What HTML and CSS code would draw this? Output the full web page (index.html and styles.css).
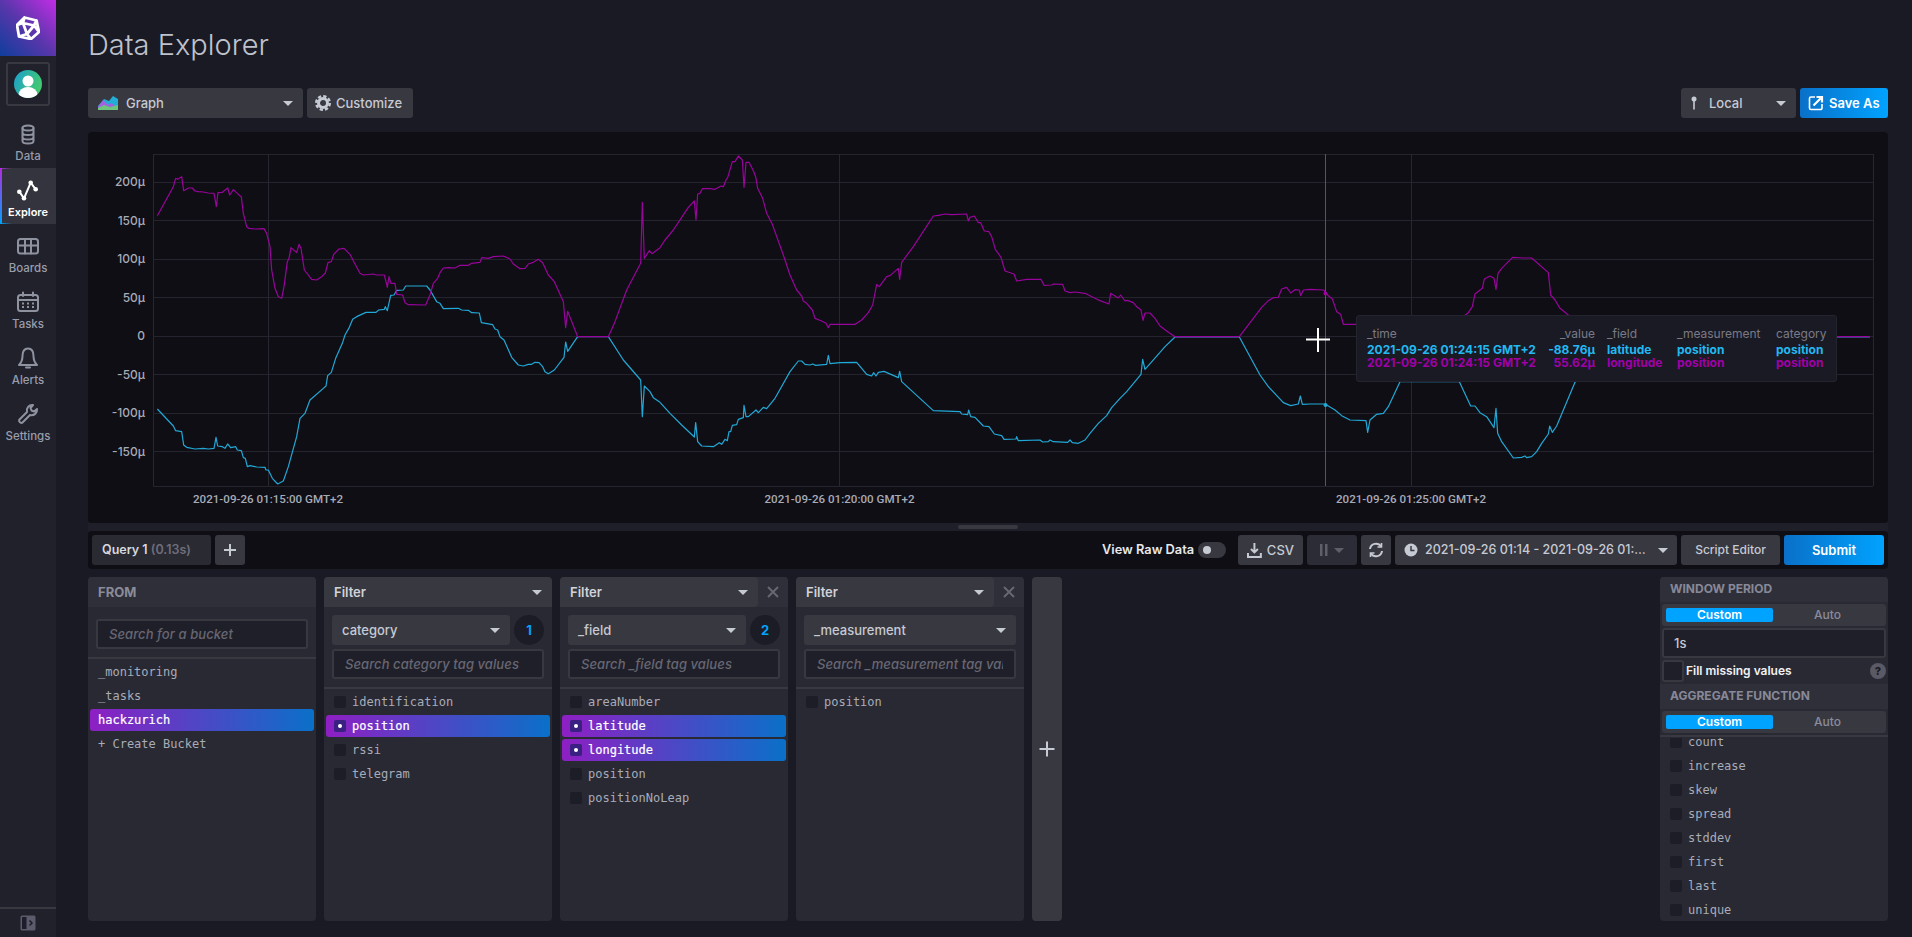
FILE: index.html
```html
<!DOCTYPE html>
<html lang="en">
<head>
<meta charset="utf-8">
<title>Data Explorer</title>
<link rel="stylesheet" href="styles.css">
</head>
<body>
<nav class="nav">
  <div class="logo">
    <svg width="24" height="24" viewBox="0 0 24 24" class="logo-mark"><path d="M8.500 1.500 20.500 4.500 23 16 15 23 3 20.500 1 9Z M7 7 18 9.500 11 18Z M8.500 1.500 7 7 M20.500 4.500 18 9.500 M23 16 18 9.500 M15 23 11 18 M3 20.500 11 18 M1 9 7 7"/></svg>
  </div>
  <div class="avatar-box">
    <svg width="28" height="28" viewBox="0 0 28 28"><defs><linearGradient id="av" x1="0" y1="0" x2="1" y2=".4"><stop offset="0" stop-color="#1b9fd0"/><stop offset="1" stop-color="#41c870"/></linearGradient><clipPath id="avc"><circle cx="14" cy="14" r="14"/></clipPath></defs><circle cx="14" cy="14" r="14" fill="url(#av)"/><g clip-path="url(#avc)" fill="#fff"><circle cx="14" cy="11" r="5.500"/><ellipse cx="14" cy="25" rx="9.500" ry="8"/></g></svg>
  </div>
  <a class="nav-item">
    <svg width="24" height="24" viewBox="0 0 24 24" class="nav-icon"><ellipse cx="12" cy="6" rx="5.500" ry="2.500"/><path d="M6.500 6v13c0 1.500 2.500 2.500 5.500 2.500s5.500-1 5.500-2.500V6 M6.500 10.500c0 1.500 2.500 2.500 5.500 2.500s5.500-1 5.500-2.500 M6.500 15c0 1.500 2.500 2.500 5.500 2.500s5.500-1 5.500-2.500"/></svg>
    <span>Data</span>
  </a>
  <a class="nav-item active">
    <svg width="24" height="24" viewBox="0 0 24 24" class="nav-icon"><path d="M3.300 13.700 8 20.300 14.700 4.700 19.700 11.300"/><circle class="dot" cx="3.300" cy="13.700" r="2.300"/><circle class="dot" cx="8" cy="20.300" r="2.300"/><circle class="dot" cx="14.700" cy="4.700" r="2.300"/><circle class="dot" cx="19.700" cy="11.300" r="2.300"/></svg>
    <span>Explore</span>
  </a>
  <a class="nav-item">
    <svg width="24" height="24" viewBox="0 0 24 24" class="nav-icon"><rect x="2" y="5" width="20" height="14.500" rx="2.500"/><path d="M2 11.500H22 M9 5V19.500 M15 5V19.500"/></svg>
    <span>Boards</span>
  </a>
  <a class="nav-item">
    <svg width="24" height="24" viewBox="0 0 24 24" class="nav-icon"><rect x="2" y="5" width="20" height="16" rx="2.500"/><path d="M2 10H22 M7 2.500V6 M17 2.500V6"/><path class="dots" d="M6 13.500h2 M11 13.500h2 M16 13.500h2 M6 17h2 M11 17h2 M16 17h2"/></svg>
    <span>Tasks</span>
  </a>
  <a class="nav-item">
    <svg width="24" height="24" viewBox="0 0 24 24" class="nav-icon"><path d="M12 2.500C7.500 2.500 6.500 6 6.500 10 6.500 14 5.500 16.500 3 19H21C18.500 16.500 17.500 14 17.500 10 17.500 6 16.500 2.500 12 2.500Z M10 21.500h4"/></svg>
    <span>Alerts</span>
  </a>
  <a class="nav-item">
    <svg width="24" height="24" viewBox="0 0 24 24" class="nav-icon"><path d="M3.500 17.500 11 10C10 6 13 2.500 17 3L14.500 6 15.500 8.500 18 9.500 21 7C21.500 11 18 14 14 13L6.500 20.500C5 22 2 19 3.500 17.500Z"/></svg>
    <span>Settings</span>
  </a>
  <div class="nav-foot">
    <svg width="16" height="16" viewBox="0 0 16 16"><rect x=".5" y=".5" width="15" height="15" rx="1.500" fill="#5b5b6c"/><rect x="2" y="2" width="4.500" height="12" fill="#1d1d2b"/><path d="M9.500 5.500 12 8 9.500 10.500" fill="none" stroke="#1d1d2b" stroke-width="1.500"/></svg>
  </div>
</nav>

<main class="main">
  <header class="page-head"><h1>Data Explorer</h1></header>

  <div class="toolbar">
    <button class="btn select graph-select">
      <svg width="20" height="14" viewBox="0 0 20 14"><path d="M0 10 6 3 11 5 15 0 20 3V14H0Z" fill="#22add6"/><path d="M0 11 5 4 10 9 13 7 20 12V14H0Z" fill="#a55fe0"/><path d="M0 14V12L6 9 12 11 20 9V14Z" fill="#6cc57c"/></svg>
      <span class="grow">Graph</span><i class="caret"></i>
    </button>
    <button class="btn customize">
      <svg width="16" height="16" viewBox="0 0 16 16" class="gear"><circle cx="8" cy="8" r="4.500"/><circle cx="8" cy="8" r="6.800" class="teeth"/></svg>
      <span>Customize</span>
    </button>
    <div class="toolbar-end">
      <button class="btn select local-select">
        <svg width="6" height="14" viewBox="0 0 6 14"><circle cx="3" cy="3" r="2.500" fill="#c6cad3"/><rect x="2.200" y="4" width="1.600" height="9.500" fill="#c6cad3"/></svg>
        <span class="grow">Local</span><i class="caret"></i>
      </button>
      <button class="btn primary save-as">
        <svg width="16" height="16" viewBox="0 0 16 16" fill="none" stroke="#fff" stroke-width="1.600"><path d="M7 2H3A1.500 1.500 0 0 0 1.500 3.500V13A1.500 1.500 0 0 0 3 14.500H12.500A1.500 1.500 0 0 0 14 13V9"/><path d="M5.500 10.500 13 3M8.500 2H14V7.500" stroke-width="2.200"/></svg>
        <span>Save As</span>
      </button>
    </div>
  </div>

  <section class="chart">
    <svg class="plot" width="1800" height="391" viewBox="88 132 1800 391">
      <g class="grid-h">
        <path d="M153 154.500H1873 M153 182.500H1873 M153 220.500H1873 M153 259.500H1873 M153 297.500H1873 M153 336.500H1873 M153 374.500H1873 M153 413.500H1873 M153 451.500H1873 M153 486.500H1873"/>
      </g>
      <g class="grid-v">
        <path d="M153.500 154V486 M268.500 154V486 M839.500 154V486 M1411.500 154V486 M1873.500 154V486"/>
      </g>
      <path class="hover-line" d="M1325.500 154V486"/>
      <g class="y-labels">
        <text x="145" y="186">200µ</text>
        <text x="145" y="224.500">150µ</text>
        <text x="145" y="263">100µ</text>
        <text x="145" y="301.500">50µ</text>
        <text x="145" y="340">0</text>
        <text x="145" y="378.500">-50µ</text>
        <text x="145" y="417">-100µ</text>
        <text x="145" y="455.500">-150µ</text>
      </g>
      <g class="x-labels">
        <text x="268" y="503">2021-09-26 01:15:00 GMT+2</text>
        <text x="839.500" y="503">2021-09-26 01:20:00 GMT+2</text>
        <text x="1411" y="503">2021-09-26 01:25:00 GMT+2</text>
      </g>
      <g class="series blue">
        <polyline transform="translate(140 130) scale(.33333)" points="52,837 100,888 107,902 125,905 131,945 140,952 165,957 190,955 205,957 222,955 228,922 233,948 247,950 255,955 263,942 272,953 287,950 292,960 304,962 310,983 316,985 322,1010 330,1007 350,1011 375,1012 378,1020 385,1020 397,1045 413,1062 430,1053 445,1010 470,920 480,865 495,850 510,810 550,775 558,768 563,737 574,727 587,685 607,640 615,615 628,592 638,568 650,560 678,547 708,547 716,540 733,538 736,530 742,542 752,496 762,495 770,481 790,480 797,468 860,468 870,480 890,515 900,520 910,536 955,535 965,540 985,541 995,548 1018,549 1024,578 1058,584 1065,597 1073,600 1080,620 1092,630 1115,682 1135,705 1150,708 1165,703 1175,703 1185,697 1197,698 1208,710 1215,725 1225,731 1243,720 1272,682 1277,636 1283,664 1313,620 1405,620 1450,690 1502,750 1507,860 1513,768 1530,785 1540,803 1560,817"/>
        <polyline transform="translate(640 130) scale(.33333)" points="60,817 90,850 125,885 163,921 167,878 173,935 185,948 220,950 238,938 245,943 255,928 262,932 267,905 272,905 277,886 290,884 295,868 310,863 312,826 318,860 325,860 348,840 355,848 370,832 380,836 405,805 450,725 475,693 485,693 495,703 510,705 518,702 527,706 560,703 565,676 570,701 600,698 650,697 680,733 695,738 701,728 708,738 715,727 732,724 775,743 779,724 785,755 880,842 960,845 965,852 983,854 986,840 992,860 1005,862 1030,888 1047,890 1063,912 1085,917 1092,928 1128,927 1130,920 1135,932 1200,930 1208,936 1225,935 1230,930 1240,935 1283,937 1290,930 1297,938 1315,940 1335,930 1350,910 1375,880 1400,857 1415,833 1440,805 1460,785 1503,733 1508,688 1515,718 1560,667"/>
        <polyline transform="translate(1140 130) scale(.33333)" points="60,667 75,650 105,621 298,621 360,735 385,770 430,818 452,827 475,822 481,798 487,823 510,822 552,822 560,825 585,840 605,857 630,870 678,872 683,907 690,870 710,853 730,850 745,830 780,755 958,755 992,828 1005,828 1020,848 1040,860 1062,893 1068,835 1073,910 1085,935 1120,984 1145,982 1155,978 1160,983 1175,980 1190,965 1205,940 1225,912 1229,888 1237,907 1250,888 1305,757 1450,621 2190,621"/>
        <circle cx="1325.500" cy="405" r="2"/>
      </g>
      <g class="series magenta">
        <polyline transform="translate(140 130) scale(.33333)" points="52,257 100,170 107,145 113,148 125,140 131,182 145,174 157,174 165,183 175,185 190,186 205,189 222,190 229,230 234,188 247,187 263,174 269,195 280,179 292,190 304,201 310,250 320,290 326,295 345,297 372,296 380,310 390,350 395,420 405,475 415,500 425,505 432,470 442,395 447,385 453,353 470,368 477,343 483,355 493,420 515,448 530,450 545,440 556,429 564,398 574,395 581,373 597,357 612,355 630,373 645,402 660,430 670,435 700,432 710,435 733,435 742,472 747,440 753,460 765,460 770,493 788,495 795,518 805,524 857,525 870,495 880,460 893,445 900,428 910,414 925,413 945,414 960,406 985,406 995,400 1020,397 1025,383 1045,385 1060,380 1090,378 1110,387 1120,402 1140,416 1155,415 1165,402 1180,397 1195,388 1208,398 1225,435 1243,455 1270,515 1277,593 1283,544 1313,620 1405,620 1425,575 1460,480 1502,400 1507,217 1513,385 1528,362 1536,371 1560,353"/>
        <polyline transform="translate(640 130) scale(.33333)" points="60,353 75,330 100,300 125,262 145,232 163,213 168,270 173,192 180,190 187,176 210,176 225,178 243,168 250,170 258,150 263,143 277,95 285,95 295,78 307,90 312,172 318,97 327,97 340,122 347,140 353,175 368,205 380,250 397,283 430,375 450,435 470,480 485,498 490,513 500,520 517,540 525,565 545,573 558,580 565,593 570,583 645,583 665,570 685,548 698,525 710,463 718,470 740,440 750,437 775,415 779,448 785,397 820,350 880,258 895,256 915,252 935,254 980,252 985,273 990,262 1003,258 1015,278 1022,278 1033,303 1047,305 1055,320 1066,358 1083,382 1095,423 1122,432 1130,453 1160,448 1203,448 1212,466 1235,465 1240,462 1268,463 1275,483 1290,488 1305,486 1335,490 1380,512 1407,522 1412,490 1435,504 1442,495 1455,513 1462,511 1480,518 1490,530 1503,540 1509,571 1515,549 1530,549 1545,565 1560,588"/>
        <polyline transform="translate(1140 130) scale(.33333)" points="60,588 80,603 105,620 298,620 340,565 365,532 385,512 400,503 415,502 425,477 440,472 452,489 465,479 478,480 482,497 490,480 510,478 552,480 556,490 577,507 590,545 602,553 610,583 650,583 975,556 985,548 997,530 1005,492 1027,475 1033,447 1050,438 1062,445 1068,478 1074,430 1085,415 1118,382 1150,384 1175,384 1225,428 1232,495 1245,510 1260,535 1285,555 1450,620 2190,620"/>
        <circle cx="1325.500" cy="293.500" r="2"/>
      </g>
      <path class="cross" d="M1306 339.500H1330 M1318 328V352"/>
    </svg>
    <div class="tip">
      <span class="th">_time</span><span class="th right">_value</span><span class="th">_field</span><span class="th">_measurement</span><span class="th">category</span>
      <span class="c1">2021-09-26 01:24:15 GMT+2</span><span class="c1 right">-88.76µ</span><span class="c1">latitude</span><span class="c1">position</span><span class="c1">position</span>
      <span class="c2">2021-09-26 01:24:15 GMT+2</span><span class="c2 right">55.62µ</span><span class="c2">longitude</span><span class="c2">position</span><span class="c2">position</span>
    </div>
  </section>

  <div class="resizer"><i></i></div>

  <div class="querybar">
    <div class="qtab">Query 1 <em>(0.13s)</em></div>
    <button class="btn square"><svg width="14" height="14" viewBox="0 0 14 14" class="plus"><path d="M7 1V13M1 7H13"/></svg></button>
    <div class="qbar-end">
      <span class="raw-label">View Raw Data</span>
      <span class="switch"><i></i></span>
      <button class="btn csv">
        <svg width="15" height="16" viewBox="0 0 15 16" fill="none" stroke="#c6cad3" stroke-width="2"><path d="M7.500 1V10M4 7 7.500 10.500 11 7M1 11V15H14V11"/></svg>
        <span>CSV</span>
      </button>
      <button class="btn dim pause">
        <svg width="8" height="12" viewBox="0 0 8 12" fill="#5f5f6b"><rect width="2.500" height="12"/><rect x="5" width="2.500" height="12"/></svg>
        <i class="caret dark"></i>
      </button>
      <button class="btn square refresh">
        <svg width="16" height="16" viewBox="0 0 16 16" fill="none" stroke="#c6cad3" stroke-width="2"><path d="M2 7A6 6 0 0 1 13 4.500M14 9A6 6 0 0 1 3 11.500"/><path d="M13.500 1V5H9.500M2.500 15V11H6.500" stroke-width="1.600"/></svg>
      </button>
      <button class="btn timerange">
        <svg width="14" height="14" viewBox="0 0 14 14"><circle cx="7" cy="7" r="6.500" fill="#c6cad3"/><path d="M7 3V7.500H10.500" stroke="#383841" stroke-width="1.500" fill="none"/></svg>
        <span class="range-text">2021-09-26 01:14 - 2021-09-26 01:25:00</span><i class="caret"></i>
      </button>
      <button class="btn script">Script Editor</button>
      <button class="btn primary submit">Submit</button>
    </div>
  </div>

  <div class="builder">
    <div class="card">
      <div class="card-head plain">FROM</div>
      <div class="card-tools bucket-tools"><input class="search" placeholder="Search for a bucket"></div>
      <ul class="list">
        <li>_monitoring</li>
        <li>_tasks</li>
        <li class="on">hackzurich</li>
        <li>+ Create Bucket</li>
      </ul>
    </div>

    <div class="card">
      <div class="card-head"><span class="head-main">Filter<i class="caret"></i></span></div>
      <div class="card-tools">
        <div class="tag-row"><button class="btn select tag"><span class="grow">category</span><i class="caret"></i></button><span class="badge">1</span></div>
        <input class="search" placeholder="Search category tag values">
      </div>
      <ul class="list checks">
        <li><i class="box"></i>identification</li>
        <li class="on"><i class="box"></i>position</li>
        <li><i class="box"></i>rssi</li>
        <li><i class="box"></i>telegram</li>
      </ul>
    </div>

    <div class="card">
      <div class="card-head"><span class="head-main closable">Filter<i class="caret"></i></span><span class="close"><svg width="12" height="12" viewBox="0 0 12 12"><path d="M1 1 11 11M11 1 1 11"/></svg></span></div>
      <div class="card-tools">
        <div class="tag-row"><button class="btn select tag"><span class="grow">_field</span><i class="caret"></i></button><span class="badge">2</span></div>
        <input class="search" placeholder="Search _field tag values">
      </div>
      <ul class="list checks">
        <li><i class="box"></i>areaNumber</li>
        <li class="on"><i class="box"></i>latitude</li>
        <li class="on"><i class="box"></i>longitude</li>
        <li><i class="box"></i>position</li>
        <li><i class="box"></i>positionNoLeap</li>
      </ul>
    </div>

    <div class="card">
      <div class="card-head"><span class="head-main closable">Filter<i class="caret"></i></span><span class="close"><svg width="12" height="12" viewBox="0 0 12 12"><path d="M1 1 11 11M11 1 1 11"/></svg></span></div>
      <div class="card-tools">
        <div class="tag-row"><button class="btn select tag"><span class="grow">_measurement</span><i class="caret"></i></button></div>
        <input class="search" placeholder="Search _measurement tag values">
      </div>
      <ul class="list checks">
        <li><i class="box"></i>position</li>
      </ul>
    </div>

    <button class="add-card"><svg width="16" height="16" viewBox="0 0 16 16" class="plus"><path d="M8 .500V15.500M.500 8H15.500"/></svg></button>

    <aside class="card side">
      <div class="side-head">WINDOW PERIOD</div>
      <div class="toggle"><span class="t-on">Custom</span><span>Auto</span></div>
      <input class="search period" value="1s">
      <div class="fill-row"><i class="fill-box"></i><span class="fill-label">Fill missing values</span><span class="help">?</span></div>
      <div class="side-head">AGGREGATE FUNCTION</div>
      <div class="toggle"><span class="t-on">Custom</span><span>Auto</span></div>
      <div class="side-rule"></div>
      <div class="side-scroll">
        <ul class="list checks scrolled">
          <li><i class="box"></i>count</li>
          <li><i class="box"></i>increase</li>
          <li><i class="box"></i>skew</li>
          <li><i class="box"></i>spread</li>
          <li><i class="box"></i>stddev</li>
          <li><i class="box"></i>first</li>
          <li><i class="box"></i>last</li>
          <li><i class="box"></i>unique</li>
        </ul>
      </div>
    </aside>
  </div>
</main>
</body>
</html>
```

FILE: styles.css
```css
* { box-sizing: border-box; }
html, body { height: 100%; }
body {
  margin: 0;
  display: flex;
  height: 937px;
  overflow: hidden;
  background: #1a1a24;
  color: #c6cad3;
  font: 500 13px/16px Inter, Roboto, sans-serif;
}
ul { list-style: none; margin: 0; padding: 0; }
i { font-style: normal; display: block; flex: none; }

/* side navigation */
.nav { width: 56px; flex: none; display: flex; flex-direction: column; background: #20212a; }
.logo {
  height: 56px; display: flex; align-items: center; justify-content: center;
  background: linear-gradient(45deg, #0e3e9c 0%, #5a36ab 50%, #c22de6 100%);
}
.logo-mark path { fill: none; stroke: #fff; stroke-width: 2.8; stroke-linejoin: round; stroke-linecap: round; }
.avatar-box {
  width: 44px; height: 44px; margin: 6px; border: 2px solid #383841; border-radius: 3px;
  display: flex; align-items: center; justify-content: center;
}
.nav-item {
  height: 56px; padding-top: 10px; display: flex; flex-direction: column; align-items: center;
  color: #999dab; font-size: 11.5px; line-height: 16px;
}
.nav-item span { margin-top: 2px; }
.nav-icon { fill: none; stroke: #8f93a0; stroke-width: 2; stroke-linejoin: round; stroke-linecap: round; }
.nav-icon .dots { stroke-width: 1.8; stroke-linecap: butt; }
.nav-item.active {
  color: #fff; font-weight: 600; font-size: 11px;
  background:
    linear-gradient(to right, #b32be0, transparent) 0 0 / 12px 1px no-repeat,
    linear-gradient(to right, #00a3ff, transparent) 0 100% / 12px 1px no-repeat,
    linear-gradient(to bottom, #b32be0, #00a3ff) 0 0 / 2px 100% no-repeat,
    #34343e;
}
.nav-item.active .nav-icon { stroke: #fff; }
.nav-item.active .dot { fill: #fff; stroke: none; }
.nav-foot {
  margin-top: auto; height: 30px; border-top: 2px solid #383841;
  display: flex; align-items: center; justify-content: center;
}

/* page */
.main { flex: 1; min-width: 0; padding: 0 24px 16px 32px; display: flex; flex-direction: column; }
.page-head { height: 88px; display: flex; align-items: flex-start; }
h1 { margin: 26px 0 0; font-size: 29px; line-height: 38px; font-weight: 300; color: #bec2cc; }

.toolbar { display: flex; gap: 4px; height: 30px; margin-bottom: 14px; }
.toolbar-end { margin-left: auto; display: flex; gap: 4px; }

.btn {
  height: 30px; padding: 0 10px; border: 0; border-radius: 3px; background: #383841;
  color: #c6cad3; font: inherit; display: flex; align-items: center; gap: 5px; white-space: nowrap;
}
.grow { flex: 1; min-width: 0; text-align: left; }
.caret { width: 0; height: 0; border-left: 5px solid transparent; border-right: 5px solid transparent; border-top: 5px solid #c6cad3; }
.caret.dark { border-top-color: #5f5f6b; }
.graph-select { width: 215px; gap: 8px; }
.customize { width: 106px; padding: 0 8px; }
.local-select { width: 115px; gap: 12px; }
.save-as { width: 88px; padding: 0 8px; gap: 5px; color: #fff; font-weight: 600; }
.primary { background: linear-gradient(to right, #0a70c8, #00a3ff); color: #fff; font-weight: 600; }
.gear circle { fill: none; stroke: #c6cad3; stroke-width: 3; }
.gear .teeth { stroke-width: 2.4; stroke-dasharray: 3.3 2.04; }

/* chart */
.chart { position: relative; height: 391px; background: #0f0e15; border-radius: 4px; flex: none; }
.plot { display: block; }
.grid-h path { fill: none; stroke: #24242e; stroke-width: 1; }
.grid-v path { fill: none; stroke: #272731; stroke-width: 1; }
.hover-line { stroke: #565663; stroke-width: 1; fill: none; }
.y-labels text { text-anchor: end; font: 500 12px Inter, Roboto, sans-serif; fill: #a8abb6; }
.x-labels text { text-anchor: middle; font: 500 11.6px Roboto, Inter, sans-serif; fill: #a8abb6; }
.series polyline { fill: none; stroke-width: 1.2; vector-effect: non-scaling-stroke; stroke-linejoin: round; }
.blue polyline { stroke: #22a8d6; }
.blue circle { fill: #22a8d6; }
.magenta polyline { stroke: #98049c; }
.magenta circle { fill: #98049c; }
.cross { stroke: #fff; stroke-width: 2; fill: none; }

.tip {
  position: absolute; left: 1268px; top: 183px; width: 481px; height: 67px;
  padding: 11px 10px 0; background: #1a1a24; border: 1px solid #24242e; border-radius: 3px;
  display: grid; grid-template-columns: 170px 46px 58px 87px 49px; column-gap: 12px;
  grid-auto-rows: 13px; font-size: 12px; line-height: 13px; white-space: nowrap;
}
.tip span { font-weight: 700; }
.tip .th { font-weight: 400; color: #7a7a86; height: 16px; }
.tip .right { text-align: right; justify-self: end; }
.c1 { color: #22b8f0; margin-top: 3px; }
.c2 { color: #a000a8; margin-top: 3px; }

.resizer { height: 8px; flex: none; display: flex; align-items: center; justify-content: center; background: #1f1f29; }
.resizer i { width: 60px; height: 4px; border-radius: 2px; background: #383841; }

/* query bar */
.querybar {
  height: 38px; flex: none; padding: 4px; margin-bottom: 8px; display: flex; gap: 4px;
  background: #0f0e15; border-radius: 4px;
}
.qtab {
  width: 119px; height: 30px; padding-left: 10px; border-radius: 3px; background: #2a2a33;
  font-size: 12.5px; font-weight: 600; line-height: 30px; color: #d6d8de; white-space: nowrap;
}
.qtab em { font-style: normal; color: #6e6e7a; }
.square { width: 30px; padding: 0; justify-content: center; }
.plus { fill: none; stroke: #c6cad3; stroke-width: 2; }
.qbar-end { margin-left: auto; display: flex; align-items: center; gap: 4px; }
.raw-label { width: 91px; margin-right: 1px; font-size: 12.8px; font-weight: 600; color: #e7e8eb; white-space: nowrap; }
.switch { width: 28px; height: 16px; margin-right: 8px; padding: 4px 5px; border-radius: 8px; background: #383841; }
.switch i { width: 8px; height: 8px; border-radius: 50%; background: #c6cad3; }
.csv { width: 65px; padding: 0 9px; }
.pause { width: 50px; justify-content: center; background: #2c2c36; gap: 6px; }
.timerange { width: 282px; padding: 0 9px; gap: 7px; font-size: 12.5px; }
.range-text { flex: 1; min-width: 0; overflow: hidden; text-overflow: ellipsis; text-align: left; }
.script { width: 99px; justify-content: center; padding: 0; font-size: 12px; }
.submit { width: 100px; justify-content: center; }

/* builder cards */
.builder { flex: 1; min-height: 0; display: flex; gap: 8px; }
.card { width: 228px; flex: none; display: flex; flex-direction: column; background: #292933; border-radius: 4px; overflow: hidden; }
.card-head { height: 30px; flex: none; display: flex; background: #2f2f39; font-weight: 600; color: #d0d3da; }
.card-head.plain { padding: 7px 10px; color: #8a8c9a; font-weight: 700; }
.head-main { flex: 1; display: flex; align-items: center; justify-content: space-between; padding: 0 10px; background: #383841; border-radius: 4px 4px 0 0; }
.head-main.closable { border-radius: 4px 4px 4px 0; }
.close { width: 30px; display: flex; align-items: center; justify-content: center; }
.close path { stroke: #676773; stroke-width: 2; fill: none; }

.card-tools { flex: none; padding: 8px; display: flex; flex-direction: column; gap: 4px; border-bottom: 2px solid #383841; }
.bucket-tools { padding-top: 12px; }
.tag-row { display: flex; gap: 4px; }
.tag { flex: 1; min-width: 0; }
.badge {
  width: 30px; height: 30px; border-radius: 50%; background: #1c1c26; color: #00a3ff; font-weight: 700;
  display: flex; align-items: center; justify-content: center; flex: none;
}
.search {
  display: block; width: 100%; height: 30px; padding: 0 11px; border: 2px solid #383841; border-radius: 3px;
  background: #1f1f29; color: #c6cad3; font: 500 13px Inter, Roboto, sans-serif; outline: 0;
}
.search::placeholder { color: #676773; font-style: italic; opacity: 1; letter-spacing: .08px; }

.list li {
  height: 22px; margin: 2px 2px 0; padding-left: 8px; border-radius: 3px;
  display: flex; align-items: center; gap: 6px;
  font: 400 12px "DejaVu Sans Mono", "Liberation Mono", monospace; color: #a8acb8; white-space: pre;
}
.list li.on { background: linear-gradient(to right, #8e1fc3, #0a70c8); color: #fff; -webkit-text-stroke: .2px #fff; }
.box { position: relative; width: 12px; height: 12px; border-radius: 2px; background: #1d1d27; }
.on .box { background: #3a2080; }
.on .box::after { content: ""; position: absolute; left: 4px; top: 4px; width: 4px; height: 4px; border-radius: 50%; background: #fff; }

.add-card { width: 30px; flex: none; padding: 0; border: 0; border-radius: 4px; background: #383841; display: flex; align-items: center; justify-content: center; }

.side { margin-left: auto; }
.side-head { height: 25px; flex: none; padding: 0 10px; background: #2f2f39; color: #878998; font-size: 12px; font-weight: 700; line-height: 24px; white-space: nowrap; }
.toggle { flex: none; height: 22px; margin: 2px 2px 0; padding: 4px; border-radius: 3px; background: #383841; display: grid; grid-template-columns: 107px 1fr; font-size: 12px; line-height: 14px; text-align: center; color: #8a8c9a; }
.t-on { background: #00a3ff; color: #fff; border-radius: 2px; font-weight: 600; }
.period { width: 224px; margin: 2px 2px 0; flex: none; padding: 0 10px; }
.fill-row { flex: none; height: 22px; margin: 2px 2px 2px; display: flex; align-items: center; gap: 2px; }
.fill-box { width: 22px; height: 22px; border: 2px solid #383841; border-radius: 3px; background: #1f1f29; }
.fill-label { flex: 1; font-size: 12px; font-weight: 600; color: #f1f1f3; }
.help { width: 16px; height: 16px; border-radius: 50%; background: #5a5a66; color: #1a1a24; font-size: 11px; font-weight: 800; line-height: 16px; text-align: center; }
.side-rule { flex: none; height: 2px; margin-top: 2px; background: #383841; }
.side-scroll { flex: 1; min-height: 0; margin-top: 1px; overflow: hidden; }
.scrolled { margin-top: -9px; }
```
